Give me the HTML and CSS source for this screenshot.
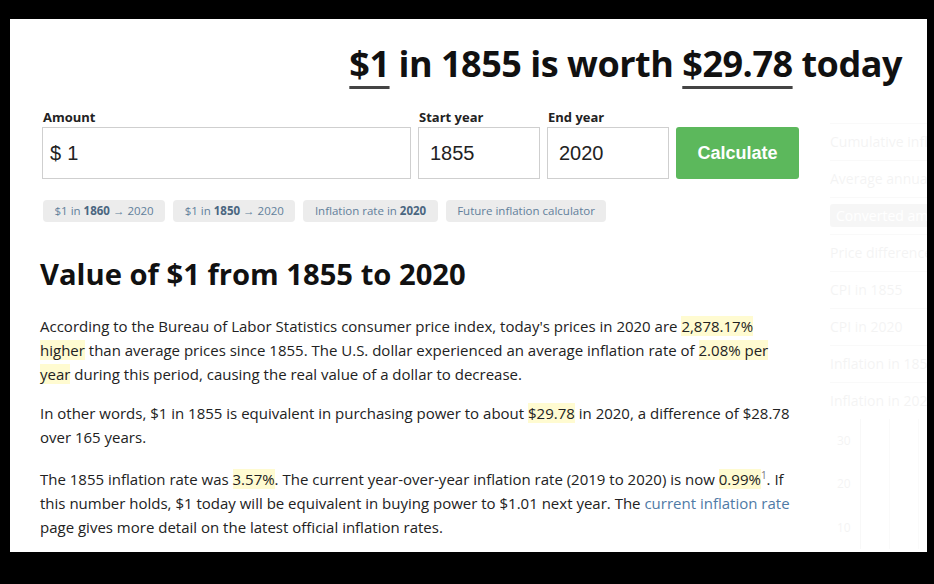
FILE: index.html
```html
<!DOCTYPE html>
<html lang="en">
<head>
<meta charset="utf-8">
<title>$1 in 1855 is worth $29.78 today</title>
<link rel="stylesheet" href="styles.css">
</head>
<body>
<div class="frame">
  <header class="hero">
    <h1 class="headline"><span class="uline">$1</span> in 1855 is worth <span class="uline">$29.78</span> today</h1>
  </header>
  <div class="content">
    <main class="main">
      <form class="calc">
        <div class="field amount">
          <label class="label">Amount</label>
          <div class="box"><span class="prefix">$</span>1</div>
        </div>
        <div class="field year">
          <label class="label">Start year</label>
          <div class="box">1855</div>
        </div>
        <div class="field year">
          <label class="label">End year</label>
          <div class="box">2020</div>
        </div>
        <div class="field btnfield">
          <span class="label">&nbsp;</span>
          <button type="button" class="btn">Calculate</button>
        </div>
      </form>
      <nav class="chips">
        <a class="chip">$1 in <b>1860</b> → 2020</a>
        <a class="chip">$1 in <b>1850</b> → 2020</a>
        <a class="chip">Inflation rate in <b>2020</b></a>
        <a class="chip">Future inflation calculator</a>
      </nav>
      <h2 class="title">Value of $1 from 1855 to 2020</h2>
      <p class="para">According to the Bureau of Labor Statistics consumer price index, today's prices in 2020 are <mark class="hl">2,878.17% higher</mark> than average prices since 1855. The U.S. dollar experienced an average inflation rate of <mark class="hl">2.08% per year</mark> during this period, causing the real value of a dollar to decrease.</p>
      <p class="para">In other words, $1 in 1855 is equivalent in purchasing power to about <mark class="hl">$29.78</mark> in 2020, a difference of $28.78 over 165 years.</p>
      <p class="para para-note">The 1855 inflation rate was <mark class="hl">3.57%</mark>. The current year-over-year inflation rate (2019 to 2020) is now <mark class="hl">0.99%</mark><sup class="ref">1</sup>. If this number holds, $1 today will be equivalent in buying power to $1.01 next year. The <a class="link">current inflation rate</a> page gives more detail on the latest official inflation rates.</p>
    </main>
    <aside class="ghost">
      <div class="gitem">Cumulative inflation</div>
      <div class="gitem">Average annual rate</div>
      <div class="gitem"><span class="gpill">Converted amount</span></div>
      <div class="gitem">Price difference</div>
      <div class="gitem">CPI in 1855</div>
      <div class="gitem">CPI in 2020</div>
      <div class="gitem">Inflation in 1855</div>
      <div class="gitem">Inflation in 2020</div>
      <div class="gchart">
        <span class="gtick">30</span>
        <span class="gtick">20</span>
        <span class="gtick">10</span>
      </div>
    </aside>
  </div>
</div>
</body>
</html>
```

FILE: styles.css
```css
html, body {
  margin: 0;
  padding: 0;
}
body {
  background: #000;
  width: 934px;
  height: 584px;
  overflow: hidden;
  font-family: "Open Sans", "Noto Sans", sans-serif;
  color: #222;
}
.frame {
  margin: 19px 0 0 10px;
  width: 917px;
  height: 533px;
  background: #fff;
  overflow: hidden;
  display: flex;
  flex-direction: column;
}
.hero {
  padding: 23px 25px 0 0;
  text-align: right;
}
.headline {
  margin: 0;
  font-size: 36px;
  line-height: 43px;
  font-weight: 700;
  color: #111;
  letter-spacing: -0.48px;
  white-space: nowrap;
}
.uline {
  text-decoration: underline;
  text-decoration-color: #444;
  text-decoration-thickness: 3px;
  text-underline-offset: 9px;
}
.content {
  display: flex;
  margin-top: 24px;
}
.main {
  width: 760px;
  margin-left: 30px;
  flex: none;
}
.calc {
  display: flex;
  gap: 7px;
  margin: 0 0 0 2px;
}
.field {
  display: flex;
  flex-direction: column;
}
.amount { width: 369px; }
.year { width: 122px; }
.btnfield { width: 123px; }
.label {
  font-size: 13px;
  font-weight: 700;
  line-height: 16px;
  height: 16px;
  margin: 0 0 2px 1px;
  color: #222;
}
.box {
  height: 50px;
  border: 1px solid #cfcfcf;
  font-family: "Liberation Sans", Arial, sans-serif;
  font-size: 20px;
  line-height: 50px;
  padding-left: 11px;
  color: #222;
}
.amount .box { padding-left: 7px; }
.prefix { margin-right: 6px; }
.btn {
  height: 52px;
  border: 0;
  border-radius: 3px;
  background: #5cb85c;
  color: #fff;
  font-family: "Liberation Sans", Arial, sans-serif;
  font-size: 18px;
  font-weight: 700;
  padding: 0;
}
.chips {
  display: flex;
  gap: 8px;
  margin: 21px 0 0 3px;
}
.chip {
  display: block;
  height: 22px;
  line-height: 22px;
  padding: 0 11.5px;
  background: #ececec;
  border-radius: 4px;
  font-size: 11.5px;
  color: #62809b;
}
.chip b {
  color: #4a6680;
  font-weight: 700;
}
.title {
  margin: 35px 0 0;
  font-size: 29.2px;
  line-height: 34px;
  font-weight: 700;
  color: #111;
}
.para {
  margin: 23px 0 0;
  font-size: 15px;
  line-height: 24px;
  color: #222;
}
.para + .para { margin-top: 15px; }
.para + .para-note { margin-top: 18px; }
.hl {
  background: #fffbd1;
  color: #222;
}
.ref {
  font-size: 10px;
  color: #777;
  line-height: 0;
}
.link {
  color: #4f7aa6;
}
.ghost {
  margin: 14px 0 0 30px;
  width: 200px;
  flex: none;
  opacity: 0.05;
  font-size: 14px;
  color: #333;
}
.gitem {
  height: 36px;
  line-height: 36px;
  border-top: 1px solid #999;
  white-space: nowrap;
}
.gpill {
  background: #666;
  color: #fff;
  padding: 2px 6px;
  border-radius: 3px;
}
.gchart {
  height: 130px;
  border-left: 1px solid #888;
  margin-left: 30px;
  display: flex;
  flex-direction: column;
  justify-content: space-around;
  background: repeating-linear-gradient(90deg, transparent 0 28px, #aaa 28px 29px);
}
.gtick {
  margin-left: -24px;
  font-size: 12px;
}
```
